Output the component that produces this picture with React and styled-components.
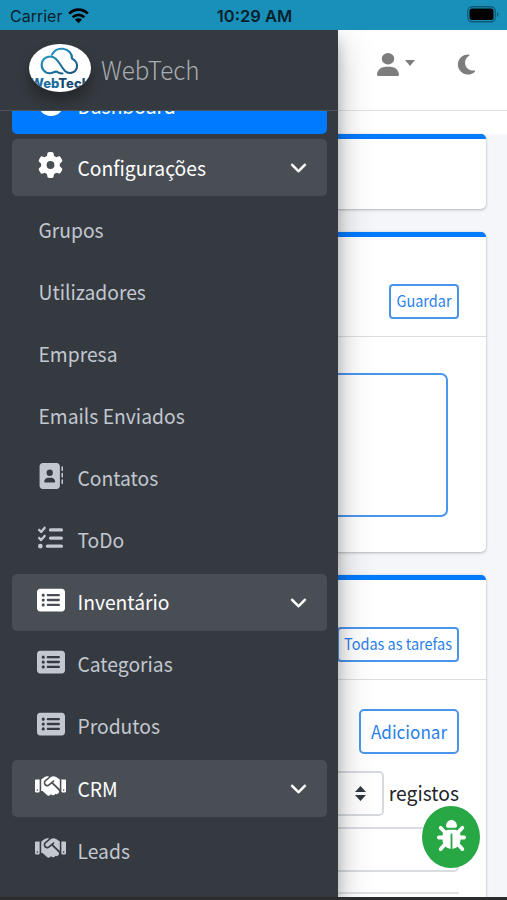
import React from "react";
import styled, { createGlobalStyle } from "styled-components";
import {
  FaAddressBook,
  FaBug,
  FaChevronDown,
  FaGaugeHigh,
  FaGear,
  FaHandshake,
  FaListCheck,
  FaMoon,
  FaRectangleList,
  FaUser,
} from "react-icons/fa6";

const GlobalStyle = createGlobalStyle`
  * {
    box-sizing: border-box;
  }
  body {
    margin: 0;
    font-family: "Noto Sans CJK SC", "Open Sans", sans-serif;
    color: #212529;
    background: #f4f6f9;
  }
`;

const Screen = styled.div`
  display: flex;
  flex-direction: column;
  height: 900px;
  overflow: hidden;
`;

const StatusBar = styled.div`
  flex: none;
  display: grid;
  grid-template-columns: 1fr auto 1fr;
  align-items: center;
  height: 30px;
  padding: 2px 8px 0 10px;
  background: #1990ba;
  color: #06202b;
  font-family: Inter, sans-serif;
  font-size: 16px;
  line-height: 28px;
`;

const Carrier = styled.div`
  display: flex;
  align-items: center;
  gap: 6px;
`;

const Clock = styled.div`
  font-weight: 600;
  font-size: 16.5px;
`;

const Battery = styled.svg`
  justify-self: end;
  margin-top: -3px;
`;

const Page = styled.div`
  position: relative;
  flex: 1;
  min-height: 0;
  display: flex;
  flex-direction: column;
  border-bottom: 3px solid #2a2c2e;
  overflow: hidden;
`;

const Navbar = styled.div`
  flex: none;
  display: flex;
  justify-content: flex-end;
  align-items: flex-start;
  height: 81px;
  padding: 23px 29px 0 0;
  background: #fff;
  border-bottom: 1px solid #dee2e6;
  color: #7d7d7d;
`;

const UserMenu = styled.div`
  display: flex;
  align-items: flex-start;
  gap: 6px;
  margin-right: 40px;
`;

const UserIcon = styled(FaUser)`
  width: 22px;
  height: 23px;
`;

const MoonIcon = styled(FaMoon)`
  width: 23px;
  height: 23px;
`;

const Caret = styled.span`
  margin-top: 7px;
  border: 5.5px solid transparent;
  border-top: 6px solid #7d7d7d;
  border-bottom: 0;
`;

const ContentHeader = styled.div`
  flex: none;
  height: 23px;
  background: #fff;
`;

const Content = styled.div`
  flex: 1;
  min-height: 0;
  display: flex;
  flex-direction: column;
  gap: 23px;
  padding: 0 21px;
  background: #f4f6f9;
`;

const Card = styled.div`
  flex: none;
  height: ${(props) => props.$height}px;
  background: #fff;
  border-top: 5px solid #007bff;
  border-radius: 5px;
  box-shadow: 0 0 1px rgba(0, 0, 0, 0.2), 0 1px 3px rgba(0, 0, 0, 0.25);
`;

const CardHeader = styled.div`
  display: flex;
  justify-content: flex-end;
  align-items: flex-start;
  height: 100px;
  padding: 47px 27px 0;
  border-bottom: 1px solid #dcdfe1;
`;

const CardBody = styled.div`
  display: flex;
  flex-direction: column;
  padding: ${(props) => props.$pad};
`;

// every caption is set slightly condensed
const Label = styled.span`
  display: inline-block;
  transform: scaleY(1.06);
`;

const OutlineButton = styled.button`
  flex: none;
  display: flex;
  align-items: center;
  justify-content: center;
  width: ${(props) => props.$width}px;
  height: 35px;
  padding: 0;
  background: transparent;
  border: 2px solid #4a96ee;
  border-radius: 4px;
  color: #2a80ea;
  font-family: inherit;
  font-size: 14.5px;
  line-height: 1;
`;

const AddButton = styled(OutlineButton)`
  align-self: flex-end;
  height: 45px;
  border-radius: 5px;
  font-size: 17.1px;
`;

const NoteBox = styled.div`
  height: 144px;
  border: 2px solid #4a96ee;
  border-radius: 7px;
`;

const LengthRow = styled.div`
  display: flex;
  justify-content: flex-end;
  align-items: center;
  gap: 5px;
  margin-top: 17px;
  font-size: 19.3px;
  line-height: 43px;
`;

const LengthSelect = styled.div`
  display: flex;
  align-items: center;
  justify-content: flex-end;
  width: 90px;
  height: 45px;
  padding-right: 16px;
  border: 2px solid #d6dade;
  border-radius: 5px;
`;

const SearchInput = styled.div`
  height: 45px;
  margin-top: 11px;
  border: 2px solid #d9dde1;
  border-radius: 5px;
`;

const TableTop = styled.div`
  height: 30px;
  margin-top: 20px;
  border-top: 2px solid #dee2e6;
`;

const Sidebar = styled.aside`
  position: absolute;
  top: 0;
  left: 0;
  bottom: 0;
  width: 338px;
  display: flex;
  flex-direction: column;
  background: #353a40;
  box-shadow: 0 14px 34px rgba(0, 0, 0, 0.25), 0 10px 12px rgba(0, 0, 0, 0.22);
`;

const Brand = styled.div`
  flex: none;
  display: flex;
  align-items: center;
  gap: 10px;
  height: 81px;
  padding-left: 29px;
  border-bottom: 1px solid #4b545c;
  color: #a9adb2;
  font-size: 24.2px;
  font-weight: 300;
  line-height: 76px;
`;

const BrandName = styled(Label)`
  margin-top: -2px;
`;

const LogoBadge = styled.div`
  width: 62px;
  height: 48px;
  margin-top: -4px;
  border-radius: 50%;
  background: #fff;
  box-shadow: 0 9px 14px rgba(0, 0, 0, 0.32);
  overflow: hidden;

  svg {
    display: block;
  }
`;

const NavScroll = styled.nav`
  flex: 1;
  min-height: 0;
  padding: 0 11px 0 12px;
  overflow: hidden;
`;

// the list is scrolled, so most of the first entry is under the brand bar
const NavList = styled.div`
  display: flex;
  flex-direction: column;
  gap: 4.7px;
  margin-top: -34px;
`;

const NavItem = styled.a`
  flex: none;
  display: flex;
  align-items: center;
  height: 57.4px;
  padding: 0 20px 0 ${(props) => (props.$plain ? 26.5 : 19.5)}px;
  border-radius: 5px;
  color: ${(props) => (props.$active || props.$open ? "#fff" : "#c2c7d0")};
  background: ${(props) =>
    props.$active ? "#007bff" : props.$open ? "#494e54" : "transparent"};
  font-size: 19.3px;
  line-height: 56px;
`;

const NavIcon = styled.span`
  display: flex;
  justify-content: center;
  width: 38px;
  margin: -5px 8px 0 0;

  svg {
    width: ${(props) => props.$width}px;
    height: 26px;
  }
`;

const NavLabel = styled(Label)`
  flex: 1;
`;

const Chevron = styled(FaChevronDown)`
  width: 17px;
  height: 18px;
  margin-top: -1px;
  stroke: currentColor;
  stroke-width: 14px;
`;

const DebugButton = styled.button`
  position: absolute;
  right: 27px;
  bottom: 29px;
  display: flex;
  align-items: center;
  justify-content: center;
  width: 58px;
  height: 62px;
  padding: 0 0 3px;
  border: 0;
  border-radius: 50%;
  background: #28a745;
  color: #fff;
`;

const BugIcon = styled(FaBug)`
  width: 29px;
  height: 31px;
`;

const menu = [
  { label: "Dashboard", icon: FaGaugeHigh, width: 26, active: true },
  { label: "Configurações", icon: FaGear, width: 25, open: true },
  { label: "Grupos" },
  { label: "Utilizadores" },
  { label: "Empresa" },
  { label: "Emails Enviados" },
  { label: "Contatos", icon: FaAddressBook, width: 25 },
  { label: "ToDo", icon: FaListCheck, width: 25 },
  { label: "Inventário", icon: FaRectangleList, width: 28, open: true },
  { label: "Categorias", icon: FaRectangleList, width: 28 },
  { label: "Produtos", icon: FaRectangleList, width: 28 },
  { label: "CRM", icon: FaHandshake, width: 31, open: true },
  { label: "Leads", icon: FaHandshake, width: 31 },
];

const WifiIcon = () => (
  <svg width="21" height="16" viewBox="0 0 21 16" fill="none" stroke="#000" strokeWidth="2.7">
    <path d="M1.2 5.6C6.4 .4 14.6 .4 19.8 5.6" />
    <path d="M4.7 9.2C8 6 13 6 16.3 9.2" />
    <path d="M7 11.6C9 9.9 12 9.9 14 11.6L10.5 15.2Z" fill="#000" stroke="none" />
  </svg>
);

const Logo = () => (
  <svg width="62" height="48" viewBox="0 0 62 48">
    <defs>
      <linearGradient id="brandBlue" x1="0" y1="0" x2="1" y2="1">
        <stop offset="0" stopColor="#2aa0cc" />
        <stop offset="1" stopColor="#14507f" />
      </linearGradient>
    </defs>
    <g
      fill="none"
      stroke="url(#brandBlue)"
      strokeWidth="2.1"
      strokeLinecap="round"
      strokeLinejoin="round"
    >
      <path d="M23 10.5C25.500 6 30 4.300 34 4.800C39.500 5.500 43.200 9.500 43 14.500C47 16.300 49 20.500 47.800 24C46 29.500 39.500 30.300 36 27C32.500 23.500 30.500 18 26.500 14.500C21.500 10.500 14.500 13 13 18.500C11.500 24.500 15.500 29.200 21 29.200C24.500 29.200 25.500 26.800 28 27.800C29.500 28.500 30 29.500 33.500 29.500" />
    </g>
    <text
      x="31"
      y="43.5"
      textAnchor="middle"
      textLength="60"
      lengthAdjust="spacingAndGlyphs"
      fontFamily="Inter, sans-serif"
      fontWeight="800"
      fontSize="12.5"
      fill="#1a6d9d"
    >
      Web<tspan fill="#174a70">Tech</tspan>
    </text>
  </svg>
);

const App = () => {
  return (
    <Screen>
      <GlobalStyle />
      <StatusBar>
        <Carrier>
          Carrier
          <WifiIcon />
        </Carrier>
        <Clock>10:29 AM</Clock>
        <Battery width="32" height="17" viewBox="0 0 32 17">
          <rect x="0.75" y="0.75" width="27.5" height="15" rx="4.5" fill="none" stroke="#0d5a76" strokeWidth="1.3" />
          <rect x="2.5" y="2.5" width="24" height="11.5" rx="2.5" fill="#000" />
          <path d="M30 6v5c2-.8 2-4.2 0-5z" fill="#0d5a76" />
        </Battery>
      </StatusBar>
      <Page>
        <Navbar>
          <UserMenu>
            <UserIcon preserveAspectRatio="none" />
            <Caret />
          </UserMenu>
          <MoonIcon />
        </Navbar>
        <ContentHeader />
        <Content>
          <Card $height={75} />
          <Card $height={320}>
            <CardHeader>
              <OutlineButton $width={70}>
                <Label>Guardar</Label>
              </OutlineButton>
            </CardHeader>
            <CardBody $pad="36px 38px">
              <NoteBox />
            </CardBody>
          </Card>
          <Card $height={400}>
            <CardHeader>
              <OutlineButton $width={122}>
                <Label>Todas as tarefas</Label>
              </OutlineButton>
            </CardHeader>
            <CardBody $pad="29px 27px">
              <AddButton $width={100}>
                <Label>Adicionar</Label>
              </AddButton>
              <LengthRow>
                <LengthSelect>
                  <svg width="11" height="15" viewBox="0 0 11 15" fill="#343a40">
                    <path d="M0 6h11L5.5 0zM0 9h11L5.5 15z" />
                  </svg>
                </LengthSelect>
                <Label>registos</Label>
              </LengthRow>
              <SearchInput />
              <TableTop />
            </CardBody>
          </Card>
        </Content>
        <Sidebar>
          <Brand>
            <LogoBadge>
              <Logo />
            </LogoBadge>
            <BrandName>WebTech</BrandName>
          </Brand>
          <NavScroll>
            <NavList>
              {menu.map(({ label, icon: Icon, width, active, open }) => (
                <NavItem key={label} $active={active} $open={open} $plain={!Icon}>
                  {Icon && (
                    <NavIcon $width={width}>
                      <Icon preserveAspectRatio="none" />
                    </NavIcon>
                  )}
                  <NavLabel>{label}</NavLabel>
                  {open && <Chevron />}
                </NavItem>
              ))}
            </NavList>
          </NavScroll>
        </Sidebar>
        <DebugButton>
          <BugIcon preserveAspectRatio="none" />
        </DebugButton>
      </Page>
    </Screen>
  );
};

export default App;
